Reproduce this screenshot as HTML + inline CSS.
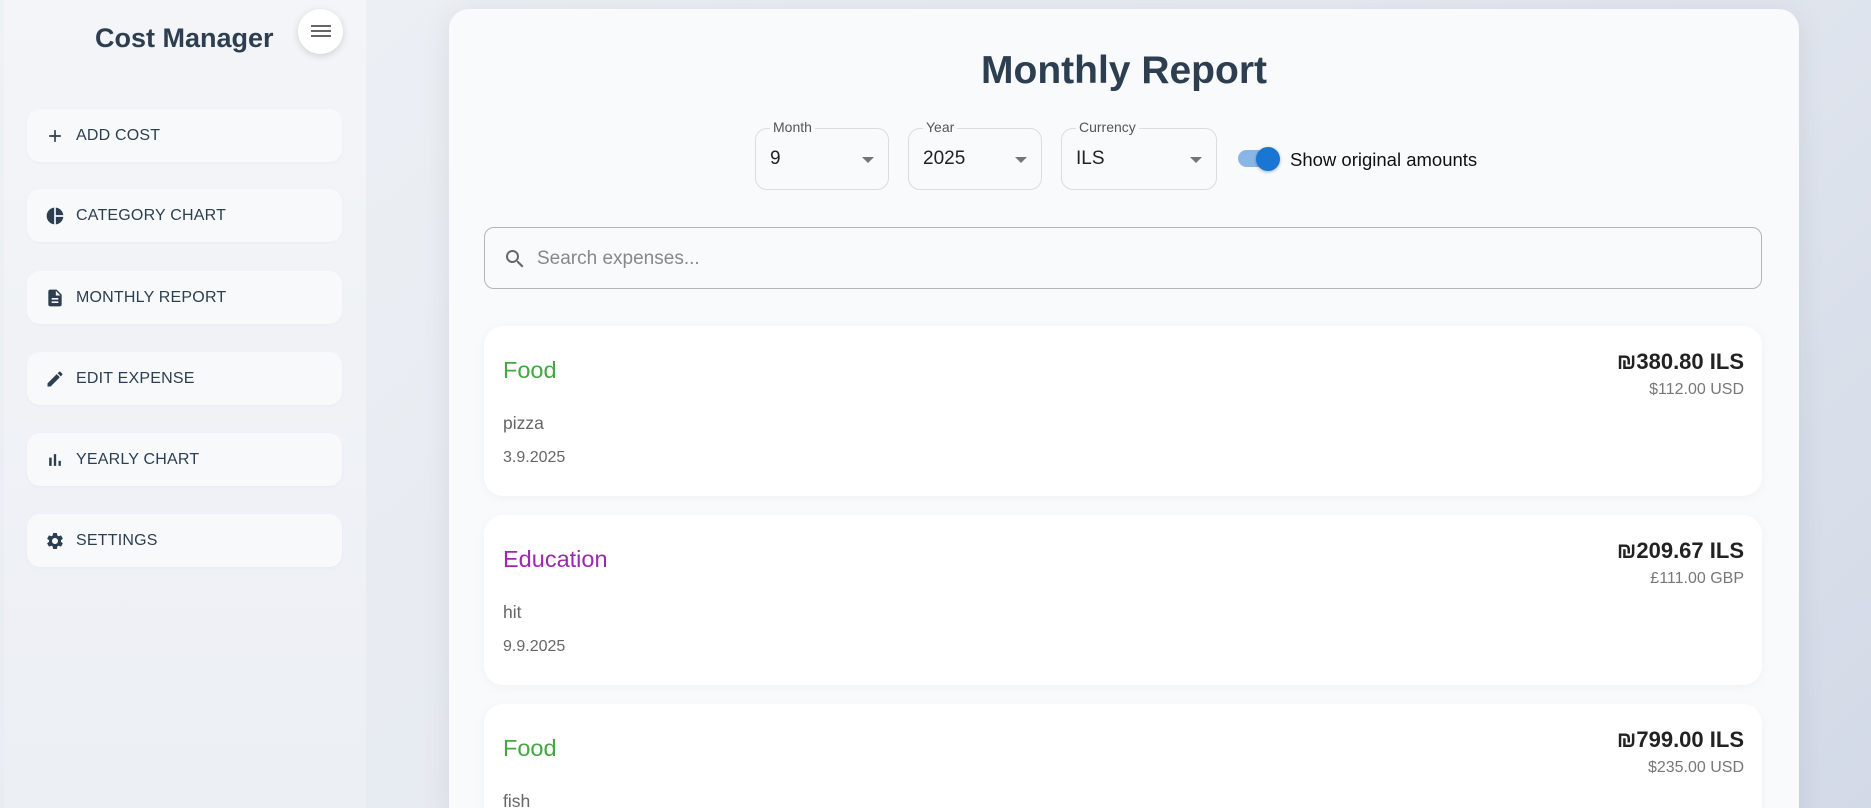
<!DOCTYPE html>
<html><head><meta charset="utf-8"><style>
*{box-sizing:border-box;margin:0;padding:0}
html,body{width:1871px;height:808px;overflow:hidden}
body{font-family:"Liberation Sans",Arial,sans-serif;background:linear-gradient(135deg,#eef1f5 0%,#e6eaf1 50%,#d3dae7 100%)}
#wrap{position:relative;width:1871px;height:808px;overflow:hidden}
.side{position:absolute;left:4px;top:0;width:362px;height:808px;background:linear-gradient(180deg,#f3f5f8,#eceff4)}
.title{position:absolute;left:95px;top:23px;font-size:27px;font-weight:bold;color:#2c3e50}
.ham{position:absolute;left:298px;top:9px;width:45px;height:45px;border-radius:50%;background:#fff;box-shadow:0 2px 8px rgba(0,0,0,.15)}
.ham i{position:absolute;left:13px;width:20px;height:2px;background:#666}
.nav{position:absolute;left:27px;width:315px;height:53px;border-radius:13px;background:#f8f9fb;box-shadow:0 1px 3px rgba(0,0,0,.03)}
.nav svg{position:absolute;left:18px;top:17px;width:20px;height:20px;fill:#2c3e50}
.nav span{position:absolute;left:49px;top:18px;font-size:16px;color:#2c3e50;letter-spacing:.2px}
.main{position:absolute;left:449px;top:9px;width:1350px;height:820px;border-radius:20px;background:#f9fafc;box-shadow:0 4px 30px rgba(0,0,0,.08)}
h1{position:absolute;left:0;width:100%;text-align:center;top:40px;font-size:39px;color:#2c3e50}
.sel{position:absolute;top:128px;height:62px;border:1px solid #dcdcdc;border-radius:12px}
.sel label{position:absolute;left:14px;top:-10px;background:#f9fafc;padding:0 3px;font-size:14px;color:#555}
.sel b{position:absolute;left:14px;top:19px;font-weight:normal;font-size:19px;color:#222}
.sel i{position:absolute;right:14px;top:28px;border-left:6px solid transparent;border-right:6px solid transparent;border-top:6px solid #757575}
.track{position:absolute;left:1238px;top:150px;width:40px;height:17px;border-radius:9px;background:#8ab6e6}
.knob{position:absolute;left:1256px;top:147px;width:24px;height:24px;border-radius:50%;background:#1976d2;box-shadow:0 1px 3px rgba(0,0,0,.3)}
.sw{position:absolute;left:1290px;top:149px;font-size:18.5px;color:#111}
.search{position:absolute;left:484px;top:227px;width:1278px;height:62px;border:1px solid #b5b5b5;border-radius:10px;background:#f9fafc}
.search svg{position:absolute;left:18px;top:19px;width:24px;height:24px;fill:#666}
.search span{position:absolute;left:52px;top:20px;font-size:19px;color:#888}
.card{position:absolute;left:484px;width:1278px;height:170px;border-radius:19px;background:#fff;box-shadow:0 2px 10px rgba(0,0,0,.04)}
.cat{position:absolute;left:19px;top:31px;font-size:23.5px}
.desc{position:absolute;left:19px;top:87px;font-size:17.5px;color:#666}
.date{position:absolute;left:19px;top:123px;font-size:16px;color:#666}
.amt{position:absolute;right:18px;top:23px;font-size:22px;font-weight:bold;color:#222}
.orig{position:absolute;right:18px;top:55px;font-size:16px;color:#777}
</style></head><body><div id="wrap">
<div class="side"></div>
<div class="title">Cost Manager</div>
<div class="ham"><i style="top:16px"></i><i style="top:21px"></i><i style="top:26px"></i></div>

<div class="nav" style="top:109px"><svg viewBox="0 0 24 24"><path d="M19 13h-6v6h-2v-6H5v-2h6V5h2v6h6v2z"/></svg><span>ADD COST</span></div>
<div class="nav" style="top:189px"><svg viewBox="0 0 24 24"><path d="M11 2v20c-5.07-.5-9-4.79-9-10s3.930-9.5 9-10zm2.03 0v8.99H22c-.47-4.74-4.24-8.52-8.97-8.99zm0 11.01V22c4.74-.47 8.5-4.25 8.97-8.99h-8.97z"/></svg><span>CATEGORY CHART</span></div>
<div class="nav" style="top:271px"><svg viewBox="0 0 24 24"><path d="M14 2H6c-1.1 0-2 .9-2 2v16c0 1.1.9 2 2 2h12c1.1 0 2-.9 2-2V8l-6-6zm2 16H8v-2h8v2zm0-4H8v-2h8v2zm-3-5V3.5L18.5 9H13z"/></svg><span>MONTHLY REPORT</span></div>
<div class="nav" style="top:352px"><svg viewBox="0 0 24 24"><path d="M3 17.250V21h3.75L17.81 9.94l-3.75-3.75L3 17.25zM20.71 7.04a1 1 0 000-1.41l-2.34-2.34a1 1 0 00-1.41 0l-1.83 1.83 3.75 3.75 1.83-1.83z"/></svg><span>EDIT EXPENSE</span></div>
<div class="nav" style="top:433px"><svg viewBox="0 0 24 24"><path d="M5 9.2h3V19H5zM10.6 5h2.8v14h-2.8zm5.6 8H19v6h-2.8z"/></svg><span>YEARLY CHART</span></div>
<div class="nav" style="top:514px"><svg viewBox="0 0 24 24"><path d="M19.14 12.94c.04-.3.06-.61.06-.94 0-.32-.02-.64-.07-.94l2.03-1.58a.49.49 0 00.12-.61l-1.92-3.32a.49.49 0 00-.59-.22l-2.39.96c-.5-.38-1.03-.7-1.62-.94l-.36-2.54a.48.48 0 00-.48-.41h-3.84c-.24 0-.43.17-.47.41l-.36 2.54c-.59.24-1.13.57-1.62.94l-2.39-.96a.49.49 0 00-.59.22L2.74 8.87c-.12.21-.08.47.12.61l2.03 1.58c-.05.3-.09.63-.09.94s.02.64.07.94l-2.03 1.58a.49.49 0 00-.12.61l1.92 3.32c.12.22.37.29.59.22l2.39-.96c.5.38 1.03.7 1.62.94l.36 2.54c.05.24.24.41.48.41h3.84c.24 0 .44-.17.47-.41l.36-2.54c.59-.24 1.13-.56 1.62-.94l2.39.96c.22.08.47 0 .59-.22l1.92-3.32c.12-.22.07-.47-.12-.61l-2.01-1.58zM12 15.6c-1.98 0-3.6-1.62-3.6-3.6s1.62-3.6 3.6-3.6 3.6 1.62 3.6 3.6-1.62 3.6-3.6 3.6z"/></svg><span>SETTINGS</span></div>

<div class="main"><h1>Monthly Report</h1></div>
<div class="sel" style="left:755px;width:134px"><label>Month</label><b>9</b><i></i></div>
<div class="sel" style="left:908px;width:134px"><label>Year</label><b>2025</b><i></i></div>
<div class="sel" style="left:1061px;width:156px"><label>Currency</label><b>ILS</b><i></i></div>
<div class="track"></div><div class="knob"></div>
<div class="sw">Show original amounts</div>
<div class="search"><svg viewBox="0 0 24 24"><path d="M15.5 14h-.79l-.28-.27A6.47 6.47 0 0016 9.5 6.5 6.5 0 109.5 16c1.61 0 3.09-.59 4.23-1.57l.27.28v.79l5 4.99L20.49 19l-4.99-5zm-6 0C7.01 14 5 11.99 5 9.5S7.01 5 9.5 5 14 7.01 14 9.5 11.99 14 9.5 14z"/></svg><span>Search expenses...</span></div>

<div class="card" style="top:326px"><div class="cat" style="color:#43a83f">Food</div><div class="desc">pizza</div><div class="date">3.9.2025</div><div class="amt">₪380.80 ILS</div><div class="orig">$112.00 USD</div></div>
<div class="card" style="top:515px"><div class="cat" style="color:#9c27b0">Education</div><div class="desc">hit</div><div class="date">9.9.2025</div><div class="amt">₪209.67 ILS</div><div class="orig">£111.00 GBP</div></div>
<div class="card" style="top:704px"><div class="cat" style="color:#43a83f">Food</div><div class="desc">fish</div><div class="amt">₪799.00 ILS</div><div class="orig">$235.00 USD</div></div>
</div></body></html>
